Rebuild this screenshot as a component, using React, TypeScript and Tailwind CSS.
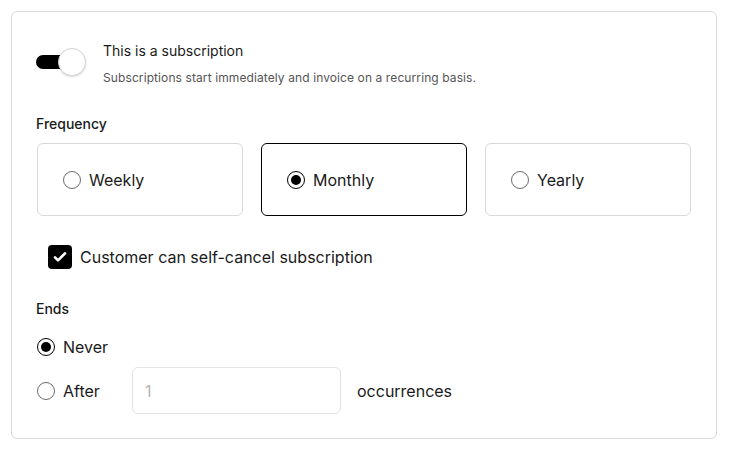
import { useState } from "react";

type Freq = "weekly" | "monthly" | "yearly";

function Radio({ checked }: { checked: boolean }) {
    // small round radio, filled dot when selected
    return (
        <span
            className={
                "flex h-[18px] w-[18px] shrink-0 items-center justify-center rounded-full border bg-white " +
                (checked ? "border-[1.5px] border-black" : "border-[#6b6b6b]")
            }
        >
            {checked && <span className="h-[10px] w-[10px] rounded-full bg-black" />}
        </span>
    );
}

export default function App() {
    const [isSubscription, setIsSubscription] = useState(true);
    const [frequency, setFrequency] = useState<Freq>("monthly");
    const [selfCancel, setSelfCancel] = useState(true);
    const [ends, setEnds] = useState<"never" | "after">("never");
    const [occurrences, setOccurrences] = useState("");

    const options: { id: Freq; label: string }[] = [
        { id: "weekly", label: "Weekly" },
        { id: "monthly", label: "Monthly" },
        { id: "yearly", label: "Yearly" },
    ];

    return (
        <div className="min-h-screen bg-white pl-[11px] pt-[11px] text-[#1a1a1a]" style={{ fontFamily: "Inter, 'Noto Sans', sans-serif" }}>
            <div className="w-[706px] rounded-[6px] border border-[#d9d9d9] px-6 pb-6 pt-7">
                {/* Subscription toggle */}
                <div className="flex items-start">
                    <button
                        type="button"
                        onClick={() => setIsSubscription(!isSubscription)}
                        className="relative mt-2 h-[28px] w-[50px] shrink-0"
                    >
                        <span className={"absolute left-0 top-[7px] h-[14px] w-[36px] rounded-full " + (isSubscription ? "bg-black" : "bg-[#d4d4d4]")} />
                        <span
                            className={
                                "absolute top-0 h-[28px] w-[28px] rounded-full border border-[#d4d4d4] bg-white shadow-[0_1px_2px_rgba(0,0,0,0.15)] " +
                                (isSubscription ? "left-[22px]" : "left-0")
                            }
                        />
                    </button>
                    <div className="ml-[17px] pt-px">
                        <p className="text-[14px] leading-5 font-normal">This is a subscription</p>
                        <p className="mt-[9px] text-[12px] leading-4 tracking-[0.1px] text-[#555]">
                            Subscriptions start immediately and invoice on a recurring basis.
                        </p>
                    </div>
                </div>

                {/* Frequency */}
                <p className="mt-7 text-[14px] leading-5 font-medium">Frequency</p>
                <div className="mt-[9px] grid grid-cols-[206px_206px_206px] gap-[18px] pl-px">
                    {options.map((opt) => (
                        <button
                            key={opt.id}
                            type="button"
                            onClick={() => setFrequency(opt.id)}
                            className={
                                "flex h-[73px] items-center gap-2 rounded-[6px] border pl-[25px] text-left " +
                                (frequency === opt.id ? "border-black" : "border-[#d9d9d9]")
                            }
                        >
                            <Radio checked={frequency === opt.id} />
                            <span className="text-[16px] leading-6">{opt.label}</span>
                        </button>
                    ))}
                </div>

                {/* Self cancel */}
                <label className="ml-3 mt-[29px] flex cursor-pointer items-center gap-2">
                    <span
                        onClick={() => setSelfCancel(!selfCancel)}
                        className={"flex h-6 w-6 items-center justify-center rounded-[4px] " + (selfCancel ? "bg-black" : "border border-[#6b6b6b] bg-white")}
                    >
                        {selfCancel && (
                            <svg width="16" height="16" viewBox="0 0 24 24" fill="none" stroke="white" strokeWidth="4" strokeLinecap="round" strokeLinejoin="round">
                                <path d="M4.5 12.5l4.5 4.5L19.5 6.5" />
                            </svg>
                        )}
                    </span>
                    <span className="text-[16px] leading-6">Customer can self-cancel subscription</span>
                </label>

                {/* Ends */}
                <p className="mt-[30px] text-[14px] leading-5 font-medium">Ends</p>
                <div className="mt-[18px] flex h-5 cursor-pointer items-center gap-2 pl-px" onClick={() => setEnds("never")}>
                    <Radio checked={ends === "never"} />
                    <span className="text-[16px] leading-6">Never</span>
                </div>
                <div className="mt-[10px] flex items-center pl-px">
                    <div className="flex w-[95px] cursor-pointer items-center gap-2" onClick={() => setEnds("after")}>
                        <Radio checked={ends === "after"} />
                        <span className="text-[16px] leading-6">After</span>
                    </div>
                    <input
                        type="text"
                        value={occurrences}
                        onChange={(e) => setOccurrences(e.target.value)}
                        placeholder="1"
                        className="h-[47px] w-[209px] rounded-[6px] border border-[#e3e3e3] px-3 text-[16px] placeholder:text-[#b5b5b5] focus:outline-none"
                    />
                    <span className="ml-4 text-[16px] leading-6">occurrences</span>
                </div>
            </div>
        </div>
    );
}
